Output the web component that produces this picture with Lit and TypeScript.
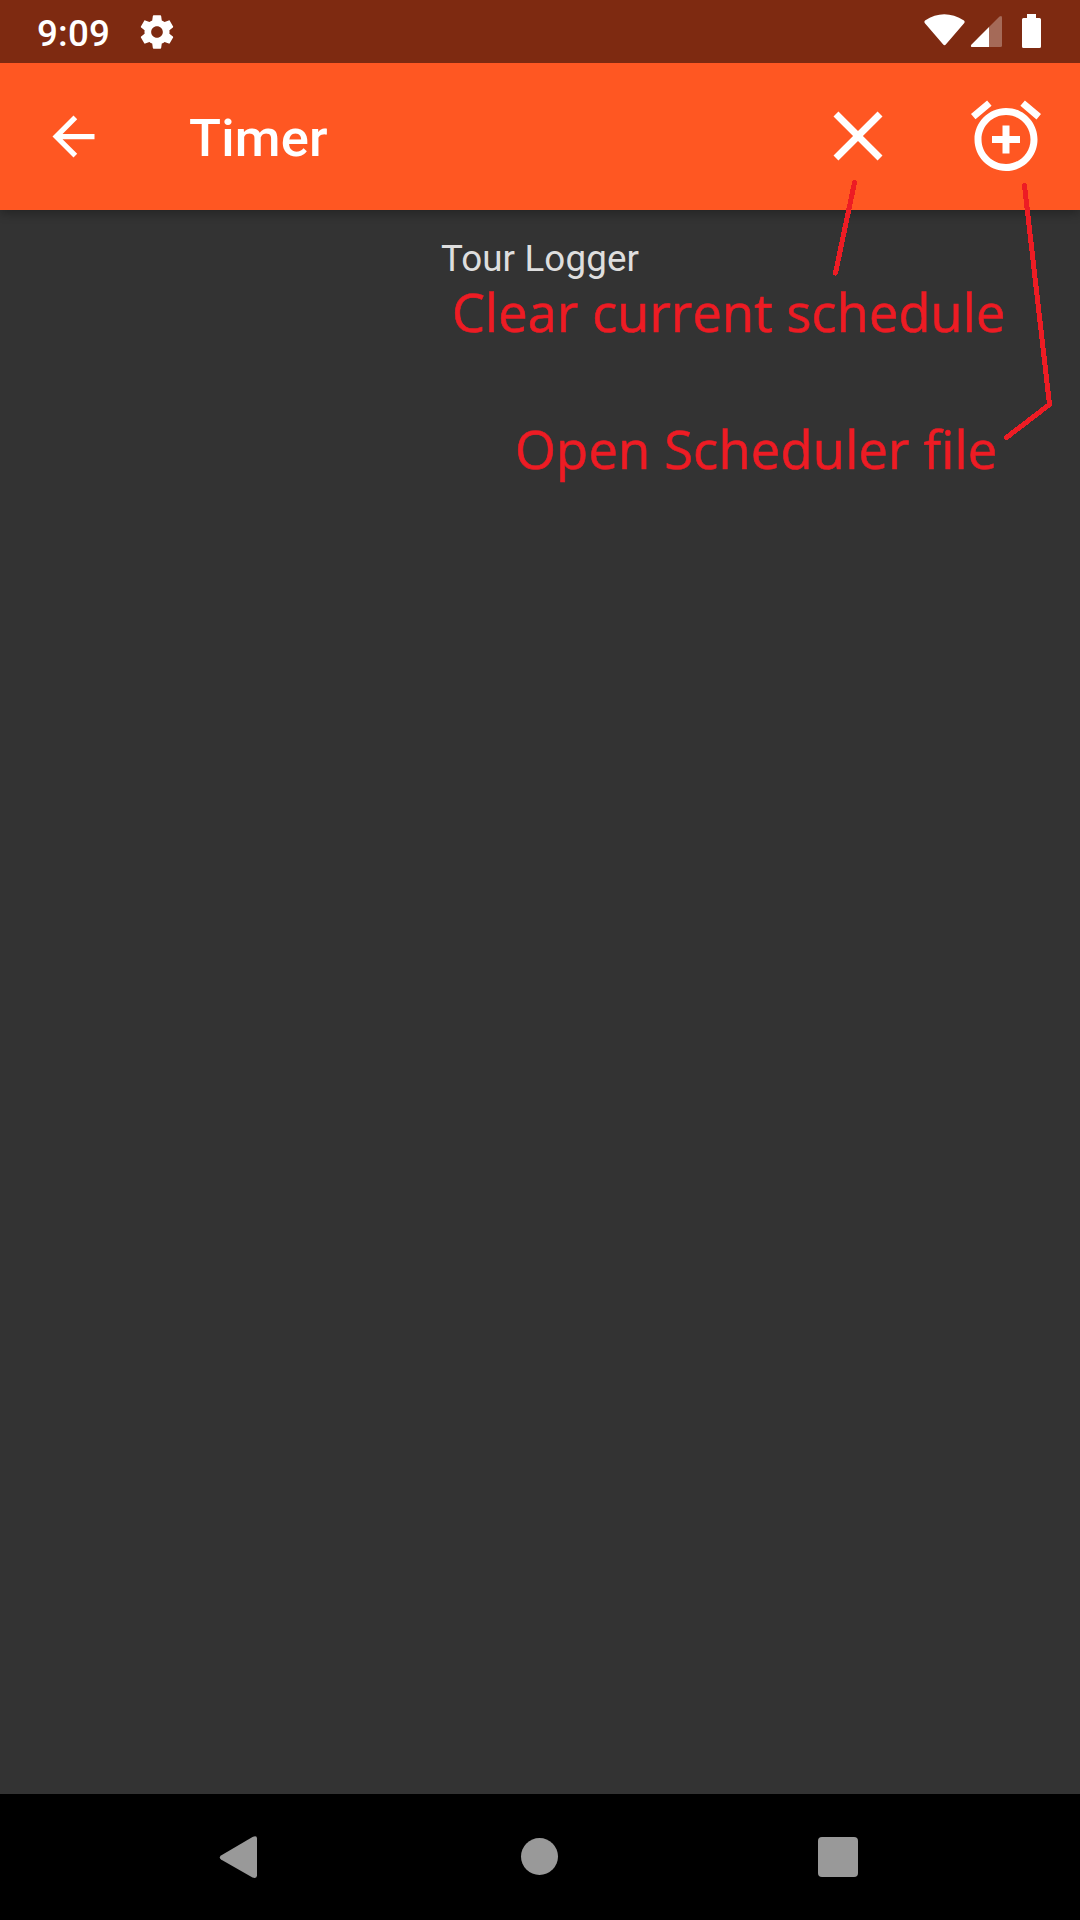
import { LitElement, html, css } from "lit";
import { customElement } from "lit/decorators.js";

@customElement("status-bar")
class StatusBar extends LitElement {
  static styles = css`
    :host {
      display: flex;
      align-items: center;
      height: 63px;
      box-sizing: border-box;
      padding: 0 36px 0 37px;
      background: #7e2a11;
      color: #fff;
      font: 500 36.75px/63px Roboto, sans-serif;
    }
    svg {
      display: block;
      fill: currentColor;
    }
    .clock {
      width: 72px;
      padding-top: 3px;
      letter-spacing: 0.2px;
    }
    .gear {
      margin-left: 28px;
    }
    .signals {
      margin-left: auto;
    }
  `;
  render() {
    return html`
      <span class="clock">9:09</span>
      <svg class="gear" width="40" height="40" viewBox="0 0 24 24">
        <path d="M19.43 12.98c.04-.32.07-.64.07-.98s-.03-.66-.07-.98l2.11-1.65c.19-.15.24-.42.12-.64l-2-3.46c-.12-.22-.39-.3-.61-.22l-2.49 1c-.52-.4-1.08-.73-1.69-.98l-.38-2.65C14.46 2.18 14.25 2 14 2h-4c-.25 0-.46.18-.49.42l-.38 2.65c-.61.25-1.17.59-1.69.98l-2.49-1c-.23-.09-.49 0-.61.22l-2 3.46c-.13.22-.07.49.12.64l2.11 1.65c-.04.32-.07.65-.07.98s.03.66.07.98l-2.11 1.65c-.19.15-.24.42-.12.64l2 3.46c.12.22.39.3.61.22l2.49-1c.52.4 1.08.73 1.69.98l.38 2.65c.03.24.24.42.49.42h4c.25 0 .46-.18.49-.42l.38-2.65c.61-.25 1.17-.59 1.69-.98l2.49 1c.23.09.49 0 .61-.22l2-3.46c.12-.22.07-.49-.12-.64l-2.11-1.65zM12 15.5c-1.93 0-3.5-1.57-3.5-3.5s1.57-3.5 3.5-3.5 3.5 1.57 3.5 3.5-1.57 3.5-3.5 3.5z"/>
      </svg>
      <svg class="signals" width="124" height="63" viewBox="920 0 124 63">
        <path d="M925 20.5Q944 8 964 20.5Q965.3 21.5 964.3 23L946 44.3Q944.5 46.3 943 44.3L924.7 23Q923.8 21.5 925 20.5Z"/>
        <path opacity=".3" d="M989 27L999.5 16.6Q1002 15 1002 17.5V45.5Q1002 47 1000.5 47H989Z"/>
        <path d="M989 27V47H972.5Q970 47 971.3 44.7Z"/>
        <path d="M1027 14h9v4h3.5q1.5 0 1.5 1.5v27q0 1.5-1.5 1.5h-16q-1.5 0-1.5-1.5v-27q0-1.5 1.5-1.5h3.5z"/>
      </svg>
    `;
  }
}

@customElement("app-bar")
class AppBar extends LitElement {
  static styles = css`
    :host {
      display: flex;
      align-items: center;
      height: 147px;
      box-sizing: border-box;
      padding: 0 32px 1px 42px;
      background: #ff5722;
      color: #fff;
      box-shadow: 0 3px 10px rgba(0, 0, 0, 0.32);
    }
    svg {
      display: block;
      fill: currentColor;
    }
    .title {
      margin: 4px auto 0 84px;
      font: 500 52.5px/62px Roboto, sans-serif;
      letter-spacing: 0.2px;
    }
    .actions {
      display: flex;
      gap: 64px;
    }
  `;
  render() {
    return html`
      <svg width="63" height="63" viewBox="0 0 24 24">
        <path d="M20 11H7.83l5.59-5.59L12 4l-8 8 8 8 1.41-1.41L7.83 13H20v-2z"/>
      </svg>
      <span class="title">Timer</span>
      <div class="actions">
        <svg width="84" height="84" viewBox="0 0 24 24">
          <path d="M19 6.41L17.59 5 12 10.59 6.41 5 5 6.41 10.59 12 5 17.59 6.41 19 12 13.41 17.59 19 19 17.59 13.41 12z"/>
        </svg>
        <svg width="84" height="84" viewBox="0 0 24 24">
          <path d="M7.88 3.39L6.6 1.86 2 5.71l1.29 1.53 4.59-3.85zM22 5.72l-4.6-3.86-1.29 1.53 4.6 3.86L22 5.72zM12 4c-4.97 0-9 4.03-9 9s4.02 9 9 9c4.97 0 9-4.03 9-9s-4.03-9-9-9zm0 16c-3.87 0-7-3.13-7-7s3.13-7 7-7 7 3.13 7 7-3.13 7-7 7zm1-11h-2v3H8v2h3v3h2v-3h3v-2h-3V9z"/>
        </svg>
      </div>
    `;
  }
}

@customElement("nav-bar")
class NavBar extends LitElement {
  static styles = css`
    :host {
      display: flex;
      align-items: center;
      justify-content: center;
      gap: 236px;
      height: 126px;
      background: #000;
    }
    svg {
      display: block;
      fill: #999;
    }
  `;
  render() {
    return html`
      <svg width="63" height="63" viewBox="0 0 63 63">
        <path d="M11 29.5L42.500 11Q47 9 47 12.500V49.500Q47 53 42.500 51.500L11 33.500Q8.500 31.500 11 29.500Z"/>
      </svg>
      <svg width="63" height="63" viewBox="0 0 63 63">
        <circle cx="30.500" cy="30.500" r="18.500"/>
      </svg>
      <svg width="63" height="63" viewBox="0 0 63 63">
        <rect x="10" y="11" width="40" height="40" rx="4"/>
      </svg>
    `;
  }
}

@customElement("app-root")
class AppRoot extends LitElement {
  static styles = css`
    :host {
      display: flex;
      flex-direction: column;
      position: relative;
      width: 1080px;
      height: 1920px;
      overflow: hidden;
      background: #333;
    }
    status-bar {
      z-index: 2;
    }
    app-bar {
      z-index: 1;
    }
    .content {
      flex: 1;
      padding-top: 27px;
      color: #dedede;
      font: 400 36.75px/43px Roboto, sans-serif;
      letter-spacing: 0.12px;
      text-align: center;
    }
    .notes {
      position: absolute;
      inset: 0;
      z-index: 3;
      fill: #ed1c24;
      font: 400 53px "Open Sans", sans-serif;
      font-feature-settings: "liga" 0;
    }
    .label {
      stroke: #ed1c24;
      stroke-width: 0.6;
    }
    .lead {
      fill: none;
      stroke: #ed1c24;
      stroke-width: 5;
      stroke-linecap: round;
      stroke-linejoin: round;
      shape-rendering: crispEdges;
    }
  `;
  render() {
    return html`
      <status-bar></status-bar>
      <app-bar></app-bar>
      <div class="content">Tour Logger</div>
      <nav-bar></nav-bar>
      <svg class="notes" width="1080" height="1920" viewBox="0 0 1080 1920">
        <path class="lead" d="M854.5 182.5L835.5 273"/>
        <path class="lead" d="M1024.5 185.5L1049.5 404.500L1006.500 437.500"/>
        <text class="label" x="452" y="331.500" textLength="553.500" lengthAdjust="spacingAndGlyphs">Clear current schedule</text>
        <text class="label" x="515" y="468.500" textLength="482.500" lengthAdjust="spacingAndGlyphs">Open Scheduler file</text>
      </svg>
    `;
  }
}
